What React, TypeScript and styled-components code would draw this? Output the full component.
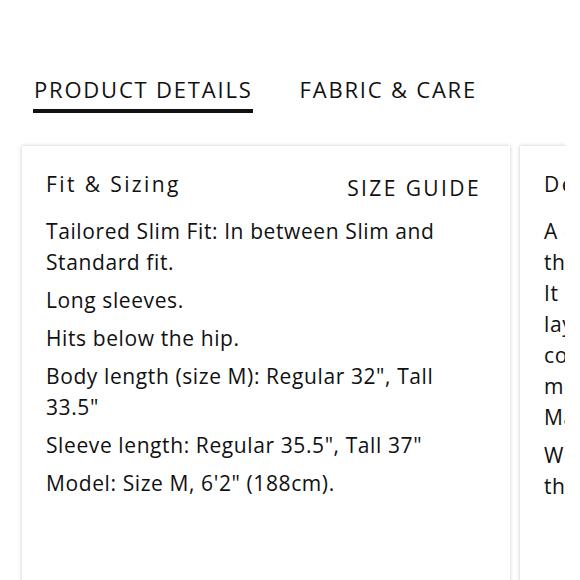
import { FC } from 'react';
import styled, { createGlobalStyle } from 'styled-components';

const GlobalStyle = createGlobalStyle`
  body {
    margin: 0;
    background-color: white;
    color: #111;
    font-family: "Open Sans", Lato, sans-serif;
  }
`;

const Page = styled.div`
  width: 580px;
  height: 580px;
  overflow: hidden;
`;

const TabBar = styled.div`
  display: flex;
  gap: 46px;
  padding: 75px 0 0 33px;
`;

const Tab = styled.div<{ $active?: boolean }>`
  font-size: 22px;
  line-height: 28px;
  letter-spacing: 1.8px;
  text-transform: uppercase;
  padding: 0 0 6px 1px;
  border-bottom: 4px solid ${({ $active }) => ($active ? '#111' : 'transparent')};
`;

const CardTrack = styled.div`
  display: flex;
  gap: 10px;
  margin: 29px 0 0 15px;
  width: 550px;
  padding: 4px 0 0 7px;
  overflow: hidden;
  box-sizing: border-box;
`;

const Card = styled.section`
  flex: 0 0 488px;
  height: 460px;
  box-sizing: border-box;
  padding: 23px 28px 0 24px;
  background-color: white;
  box-shadow: 0 0 4px rgba(0, 0, 0, 0.22);
`;

const CardHeader = styled.div`
  display: flex;
  justify-content: space-between;
  align-items: flex-end;
  margin-bottom: 17px;
`;

const CardTitle = styled.h3`
  margin: 0;
  font-size: 21px;
  font-weight: 400;
  line-height: 30px;
  letter-spacing: 2.4px;
  white-space: nowrap;
`;

const SizeGuide = styled.a`
  font-size: 21px;
  line-height: 30px;
  letter-spacing: 2.4px;
  text-transform: uppercase;
  color: inherit;
  text-decoration: none;
  position: relative;
  top: 4px;
  margin-right: 1px;
`;

const Para = styled.p`
  margin: 0 0 7px;
  font-size: 21px;
  line-height: 31px;
  letter-spacing: 0.6px;
  white-space: nowrap;
`;

const BodyPara = styled(Para)`
  white-space: normal;
`;

const fitLines = [
  'Tailored Slim Fit: In between Slim and Standard fit.',
  'Long sleeves.',
  'Hits below the hip.',
  'Body length (size M): Regular 32", Tall 33.5"',
  'Sleeve length: Regular 35.5", Tall 37"',
  'Model: Size M, 6\'2" (188cm).',
];

const App: FC = () => (
  <Page>
    <GlobalStyle />
    <TabBar>
      <Tab $active>Product Details</Tab>
      <Tab>Fabric &amp; Care</Tab>
    </TabBar>
    <CardTrack>
      <Card>
        <CardHeader>
          <CardTitle>Fit &amp; Sizing</CardTitle>
          <SizeGuide href="#">Size Guide</SizeGuide>
        </CardHeader>
        {fitLines.map((line) => (
          <BodyPara key={line}>{line}</BodyPara>
        ))}
      </Card>
      <Card>
        <CardHeader>
          <CardTitle>Details</CardTitle>
        </CardHeader>
        <Para>
          A classic button-down shirt in soft cotton
          <br />
          that's brushed for extra warmth.
          <br />
          It has a clean, slim silhouette for
          <br />
          layering under sweaters and jackets,
          <br />
          comfortable stretch for all-day
          <br />
          movement and a polished finish.
          <br />
          Machine washable.
        </Para>
        <Para>
          We recommend sizing up if you want
          <br />
          the fit to be roomier.
        </Para>
      </Card>
    </CardTrack>
  </Page>
);

export default App;
